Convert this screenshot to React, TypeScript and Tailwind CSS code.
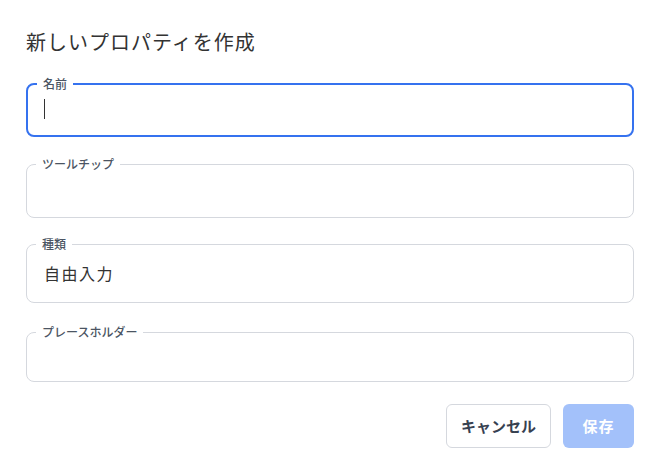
import React from 'react';

const fieldBase = 'rounded-lg p-0 min-w-0';
const legendCls = 'ml-[9px] px-[6px] text-[12px] leading-[16px] font-medium text-[#4b5563]';

function App() {
  return (
    <div className="w-[659px] h-[476px] bg-white pl-[26px] pr-[25px] pt-[28px] font-['Noto_Sans_CJK_JP','Noto_Sans',sans-serif]">
      <h2 className="text-[20px] leading-[28px] tracking-[1px] text-[#333]">新しいプロパティを作成</h2>

      {/* 名前 (focused) */}
      <fieldset className={`${fieldBase} mt-[20px] border-2 border-[#3572ef]`}>
        <legend className={legendCls}>名前</legend>
        <div className="h-[43px] pl-[16px] pt-[7px]">
          <span className="block w-px h-[20px] bg-[#333]"></span>
        </div>
      </fieldset>

      {/* ツールチップ */}
      <fieldset className={`${fieldBase} mt-[19px] border border-[#d5d8de]`}>
        <legend className={legendCls}>ツールチップ</legend>
        <div className="h-[45px]"></div>
      </fieldset>

      {/* 種類 */}
      <fieldset className={`${fieldBase} mt-[18px] border border-[#d5d8de]`}>
        <legend className={legendCls}>種類</legend>
        <div className="h-[50px] pl-[17px] pt-[10px] text-[16px] leading-[22px] tracking-[1.5px] text-[#333]">自由入力</div>
      </fieldset>

      {/* プレースホルダー */}
      <fieldset className={`${fieldBase} mt-[21px] border border-[#d5d8de]`}>
        <legend className={legendCls}>プレースホルダー</legend>
        <div className="h-[41px]"></div>
      </fieldset>

      <div className="mt-[22px] flex justify-end gap-[12px]">
        <button className="w-[105px] h-[44px] rounded-md border border-[#d5d8de] bg-white text-[15px] font-bold text-[#374151]">
          キャンセル
        </button>
        <button className="w-[71px] h-[44px] rounded-md bg-[#a3c1fa] text-[15px] font-bold tracking-[1px] text-white">
          保存
        </button>
      </div>
    </div>
  );
}

export default App;
